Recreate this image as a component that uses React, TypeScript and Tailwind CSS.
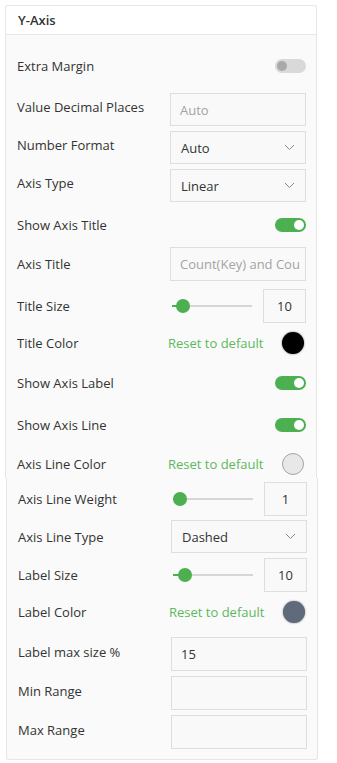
import clsx from "clsx";
import type { ReactNode } from "react";

const GREEN = "bg-[#4caf50]";

function Toggle({ on }: { on: boolean }) {
  return (
    <div
      className={clsx(
        "flex h-[14px] w-[31px] items-center rounded-full px-[2px]",
        on ? clsx(GREEN, "justify-end") : "justify-start bg-[#d9d9d9]"
      )}
    >
      <div className={clsx("h-[10px] w-[10px] rounded-full", on ? "bg-white" : "bg-[#a9a9a9]")} />
    </div>
  );
}

function Chevron() {
  return (
    <svg width="11" height="7" viewBox="0 0 11 7" className="mr-[4px]">
      <polyline points="1,1 5.5,5.5 10,1" fill="none" stroke="#8a8a8a" strokeWidth="1" />
    </svg>
  );
}

function Select({ value, h = "h-[33px]" }: { value: string; h?: string }) {
  return (
    <div className={clsx("flex w-[136px] items-center justify-between border border-[#dedede] bg-[#f9f9f9] pl-[10px] pr-[6px] text-[#333]", h)}>
      <span>{value}</span>
      <Chevron />
    </div>
  );
}

function Input({ value, muted, h = "h-[34px]" }: { value?: string; muted?: boolean; h?: string }) {
  return (
    <div
      className={clsx(
        "flex w-[136px] items-center whitespace-nowrap border border-[#dedede] bg-[#f9f9f9] pl-[9px] pr-[6px]",
        h,
        muted ? "text-[#a3a3a3]" : "text-[#333]"
      )}
    >
      <span>{value}</span>
    </div>
  );
}

function Slider({ value, knob, fill, h = "h-[34px]" }: { value: string; knob: string; fill: string; h?: string }) {
  return (
    <div className="flex w-[136px] items-center justify-between">
      {/* track + knob */}
      <div className="relative ml-[2px] h-[16px] w-[80px]">
        <div className="absolute left-0 right-0 top-[7px] h-[2px] bg-[#d6d6d6]" />
        <div className={clsx("absolute left-0 top-[7px] h-[2px] bg-[#4caf50]", fill)} />
        <div className={clsx("absolute top-[1px] h-[14px] w-[14px] rounded-full bg-[#4caf50]", knob)} />
      </div>
      <div className={clsx("flex w-[43px] items-center justify-center border border-[#dedede] bg-[#f9f9f9] text-[#333]", h)}>
        {value}
      </div>
    </div>
  );
}

function ColorPick({ swatch }: { swatch: string }) {
  return (
    <div className="-ml-[2px] flex w-[138px] items-center justify-between pr-[2px]">
      <span className="text-[#5cb85c]">Reset to default</span>
      <div className={clsx("h-[22px] w-[22px] rounded-full", swatch)} />
    </div>
  );
}

function Row({
  label,
  className,
  lift,
  children,
}: {
  label: string;
  className: string;
  lift?: boolean;
  children: ReactNode;
}) {
  return (
    <div className={clsx("flex items-center", className)}>
      <div className={clsx("w-[153px] shrink-0 text-[#333]", lift && "mb-[5px]")}>{label}</div>
      <div className="flex flex-1 justify-end">{children}</div>
    </div>
  );
}

export default function App() {
  return (
    <div className="min-h-screen bg-white pt-[5px] font-['Open_Sans',sans-serif] text-[13px] leading-[18px]">
      {/* upper half of the panel */}
      <div className="ml-[5px] w-[312px] rounded-t-[3px] border-l border-r border-t border-[#e6e6e6] bg-[#fafafa]">
        <div className="flex h-[29px] items-center rounded-t-[3px] border-b border-[#e6e6e6] bg-white pl-[12px] font-semibold text-[#333]">
          Y-Axis
        </div>
        <div className="flex flex-col pb-[3px] pl-[11px] pr-[10px]">
          <Row label="Extra Margin" className="mt-[21px] h-[20px]">
            <Toggle on={false} />
          </Row>
          <Row label="Value Decimal Places" className="mt-[17px] h-[33px]" lift>
            <Input value="Auto" muted h="h-[33px]" />
          </Row>
          <Row label="Number Format" className="mt-[5px] h-[33px]" lift>
            <Select value="Auto" />
          </Row>
          <Row label="Axis Type" className="mt-[5px] h-[33px]" lift>
            <Select value="Linear" />
          </Row>
          <Row label="Show Axis Title" className="mt-[13px] h-[20px]">
            <Toggle on />
          </Row>
          <Row label="Axis Title" className="mt-[12px] h-[34px]">
            <Input value="Count(Key) and Cou" muted />
          </Row>
          <Row label="Title Size" className="mt-[8px] h-[34px]">
            <Slider value="10" knob="left-[4px]" fill="w-[11px]" />
          </Row>
          <Row label="Title Color" className="mt-[9px] h-[22px]">
            <ColorPick swatch="bg-black shadow-[0_0_2px_rgba(0,0,0,0.6)]" />
          </Row>
          <Row label="Show Axis Label" className="mt-[19px] h-[20px]">
            <Toggle on />
          </Row>
          <Row label="Show Axis Line" className="mt-[22px] h-[20px]">
            <Toggle on />
          </Row>
          <Row label="Axis Line Color" className="mt-[18px] h-[22px]">
            <ColorPick swatch="border border-[#a5a5a5] bg-[#e8e8e8]" />
          </Row>
        </div>
      </div>

      {/* lower half, captured one pixel to the right */}
      <div className="ml-[6px] w-[312px] rounded-b-[3px] border-b border-l border-r border-[#e6e6e6] bg-[#fafafa]">
        <div className="flex flex-col pb-[10px] pl-[11px] pr-[10px]">
          <Row label="Axis Line Weight" className="mt-[4px] h-[34px]">
            <Slider value="1" knob="left-0" fill="w-[7px]" />
          </Row>
          <Row label="Axis Line Type" className="mt-[4px] h-[33px]">
            <Select value="Dashed" />
          </Row>
          <Row label="Label Size" className="mt-[5px] h-[34px]">
            <Slider value="10" knob="left-[5px]" fill="w-[12px]" />
          </Row>
          <Row label="Label Color" className="mt-[9px] h-[22px]">
            <ColorPick swatch="bg-[#5f6a7a] shadow-[0_0_2px_rgba(0,0,0,0.5)]" />
          </Row>
          <Row label="Label max size %" className="mt-[14px] h-[34px]" lift>
            <Input value="15" />
          </Row>
          <Row label="Min Range" className="mt-[5px] h-[34px]" lift>
            <Input />
          </Row>
          <Row label="Max Range" className="mt-[5px] h-[34px]" lift>
            <Input />
          </Row>
        </div>
      </div>
    </div>
  );
}
